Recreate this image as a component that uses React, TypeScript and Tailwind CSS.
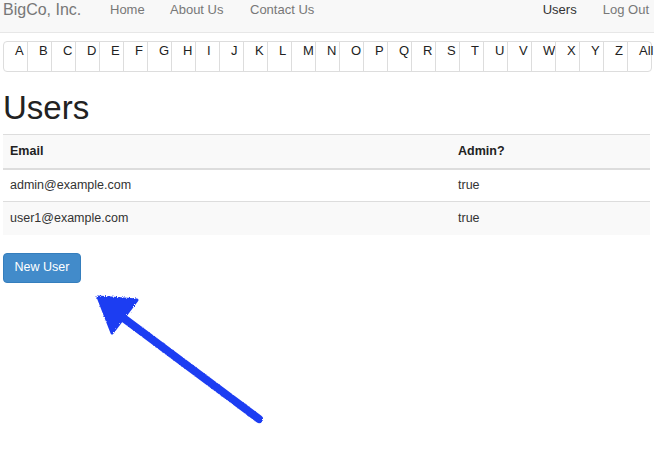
const letters = 'ABCDEFGHIJKLMNOPQRSTUVWXYZ'.split('').concat(['All']);

const users = [
  { email: 'admin@example.com', admin: 'true' },
  { email: 'user1@example.com', admin: 'true' },
];

function Navbar() {
  return (
    <div className="flex h-[33px] items-start border-b border-[#e7e7e7] bg-[#f8f8f8] pl-[3px] text-[#777]">
      <span className="w-[107px] text-[16px] leading-[20px] whitespace-nowrap">BigCo, Inc.</span>
      <nav className="flex text-[13px] leading-[20px]">
        <a className="w-[60px]">Home</a>
        <a className="w-[80px]">About Us</a>
        <a>Contact Us</a>
      </nav>
      <nav className="ml-auto flex pr-[5px] text-[13px] leading-[20px]">
        <a className="w-[60px] text-[#333]">Users</a>
        <a>Log Out</a>
      </nav>
    </div>
  );
}

function Pagination() {
  return (
    <ul className="mt-[8px] ml-[3px] flex">
      {letters.map((l) => (
        <li
          key={l}
          className="-ml-px h-[31px] w-[25px] border border-[#ddd] bg-white pl-[11px] text-[13px] leading-[18px] whitespace-nowrap text-[#222] first:ml-0 first:rounded-l-[4px] last:rounded-r-[4px]"
        >
          {l}
        </li>
      ))}
    </ul>
  );
}

function Arrow() {
  return (
    <svg className="absolute left-0 top-0" width="654" height="472" viewBox="0 0 654 472">
      <defs>
        <filter id="rough" x="-10%" y="-10%" width="120%" height="120%">
          <feTurbulence type="fractalNoise" baseFrequency="0.9" numOctaves="2" result="n" />
          <feDisplacementMap in="SourceGraphic" in2="n" scale="3" />
        </filter>
      </defs>
      <g filter="url(#rough)" fill="#1f3df2" stroke="#1f3df2">
        <polygon points="98,297 137,300 112,333" strokeWidth="3" strokeLinejoin="round" />
        <line x1="118" y1="314" x2="259" y2="419" strokeWidth="8" strokeLinecap="round" />
      </g>
    </svg>
  );
}

export default function App() {
  return (
    <div className="relative h-[472px] w-[654px] overflow-hidden bg-white font-['Liberation_Sans',Arial,sans-serif] text-[#333]">
      <Navbar />
      <Pagination />
      <h1 className="mt-[18px] ml-[3px] text-[33px] leading-[36px] text-[#222]">Users</h1>
      <table className="mt-[8px] ml-[3px] w-[647px] border-collapse text-[12.5px]">
        <thead>
          <tr className="h-[34px] border-t border-b-2 border-[#ddd] bg-[#f9f9f9]">
            <th className="w-[455px] pl-[7px] text-left text-[12.5px] font-bold text-[#222]">Email</th>
            <th className="text-left text-[12.5px] font-bold text-[#222]">Admin?</th>
          </tr>
        </thead>
        <tbody>
          {users.map((u, i) => (
            <tr
              key={u.email}
              className={i === 0 ? 'h-[33px] border-b border-[#ddd] bg-white' : 'h-[33px] bg-[#f9f9f9]'}
            >
              <td className="pl-[7px]">{u.email}</td>
              <td>{u.admin}</td>
            </tr>
          ))}
        </tbody>
      </table>
      <button className="mt-[18px] ml-[3px] h-[30px] w-[78px] rounded-[4px] border border-[#357ebd] bg-[#428bca] text-[12.5px] text-white">
        New User
      </button>
      <Arrow />
    </div>
  );
}
